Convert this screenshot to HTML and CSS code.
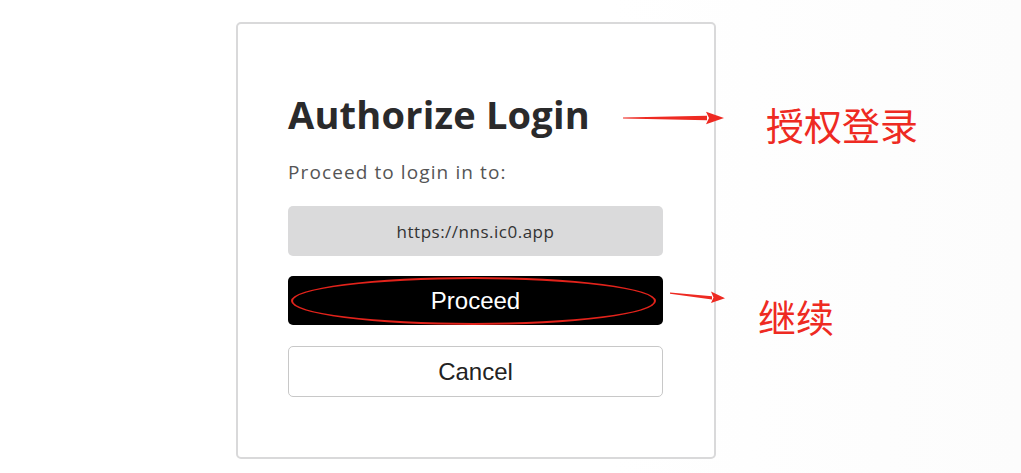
FILE: index.html
```html
<!DOCTYPE html>
<html lang="en">
<head>
  <meta charset="UTF-8">
  <meta name="viewport" content="width=device-width, initial-scale=1.0">
  <title>Authorize Login</title>
  <link rel="stylesheet" href="styles.css">
</head>
<body>

  <div class="page">
    <!-- Login card -->
    <div class="card">
      <h1 class="title">Authorize Login</h1>
      <p class="subtitle">Proceed to login in to:</p>
      <div class="origin">https://nns.ic0.app</div>
      <button class="btn btn-primary">
        Proceed
        <span class="ring"></span>
      </button>
      <button class="btn btn-secondary">Cancel</button>
    </div>

    <!-- Annotations -->
    <svg class="arrow arrow-top" width="104" height="16" viewBox="0 0 104 16">
      <polygon points="0,7.4 84,5.8 84,10.2 0,8.6" fill="#ee2a22"/>
      <polygon points="83,1.8 101,8 83,14.2 86,8" fill="#ee2a22"/>
    </svg>
    <div class="note note-top">授权登录</div>

    <svg class="arrow arrow-bottom" width="58" height="16" viewBox="0 0 58 16">
      <polygon points="0,4.6 42,8.2 42,11.6 0,5.8" fill="#ee2a22"/>
      <polygon points="41,3.6 55,10.2 41,15 43.5,9.6" fill="#ee2a22"/>
    </svg>
    <div class="note note-bottom">继续</div>
  </div>

</body>
</html>
```
FILE: styles.css
```css
/* Global Styles */
* {
  margin: 0;
  padding: 0;
  box-sizing: border-box;
}

body {
  font-family: 'Open Sans', 'Liberation Sans', sans-serif;
  background: #fff;
  color: #2a2a2a;
}

.page {
  position: relative;
  width: 1021px;
  height: 473px;
  padding: 22px 0 0 236px;
  background: linear-gradient(90deg, #fff 0%, #fff 60%, #fcfcfc 100%);
}

/* Card */
.card {
  width: 480px;
  height: 437px;
  border: 2px solid #d9d9da;
  border-radius: 5px;
  background: #fff;
  padding: 67px 51px 0 50px;
  display: flex;
  flex-direction: column;
}

.title {
  font-size: 38px;
  line-height: 46px;
  font-weight: 700;
  color: #2a2a2b;
  letter-spacing: 0.2px;
}

.subtitle {
  margin-top: 22px;
  font-size: 19px;
  line-height: 26px;
  letter-spacing: 1.1px;
  color: #555;
}

.origin {
  margin-top: 21px;
  height: 50px;
  border-radius: 5px;
  background: #dadadb;
  display: flex;
  align-items: center;
  justify-content: center;
  font-size: 17px;
  letter-spacing: 0.5px;
  color: #333;
}

/* Buttons */
.btn {
  position: relative;
  width: 100%;
  font-family: 'Liberation Sans', Arial, sans-serif;
  font-size: 24px;
  border-radius: 5px;
  cursor: pointer;
}

.btn-primary {
  margin-top: 20px;
  height: 49px;
  background: #000;
  color: #fff;
  border: none;
}

.btn-secondary {
  margin-top: 21px;
  height: 51px;
  background: #fff;
  color: #222;
  border: 1px solid #c8c8c8;
}

.ring {
  position: absolute;
  left: 3px;
  top: 1px;
  width: 365px;
  height: 48px;
  border: 2px solid #e3231b;
  border-radius: 50%;
}

/* Annotations */
.arrow {
  position: absolute;
}

.arrow-top {
  left: 623px;
  top: 110px;
}

.arrow-bottom {
  left: 670px;
  top: 288px;
}

.note {
  position: absolute;
  font-family: 'Noto Sans CJK SC', sans-serif;
  font-size: 38px;
  line-height: 44px;
  color: #ee2a22;
}

.note-top {
  left: 766px;
  top: 102px;
}

.note-bottom {
  left: 758px;
  top: 294px;
}
```
